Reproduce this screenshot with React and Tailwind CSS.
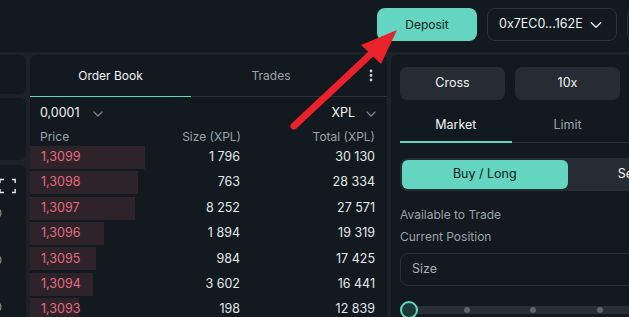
import React from "react";

const rows = [
  ["1,3099", "1 796", "30 130", 115],
  ["1,3098", "763", "28 334", 108],
  ["1,3097", "8 252", "27 571", 105],
  ["1,3096", "1 894", "19 319", 74],
  ["1,3095", "984", "17 425", 66],
  ["1,3094", "3 602", "16 441", 63],
  ["1,3093", "198", "12 839", 49],
];

function Chevron({ className }) {
  return (
    <svg className={className} width="12" height="12" viewBox="0 0 12 12" fill="none">
      <path d="M2 4l4 4 4-4" stroke="currentColor" strokeWidth="1.2" strokeLinecap="round" strokeLinejoin="round" />
    </svg>
  );
}

export default function App() {
  return (
    <div
      className="relative w-[629px] h-[317px] overflow-hidden bg-[#1c2228] text-white"
      style={{ fontFamily: "Inter, 'Noto Sans', sans-serif" }}
    >
      {/* Header */}
      <div className="h-[52px] bg-[#12191f] flex items-start justify-end pt-[8px] gap-[10px] -mr-[30px]">
        <button className="w-[100px] h-[33px] rounded-[8px] bg-[#63d5c0] text-[#102020] text-[12px] shrink-0">
          Deposit
        </button>
        <button className="w-[130px] h-[33px] rounded-[8px] border border-[#2c333a] flex items-center justify-between pl-[11px] pr-[13px] text-[12.5px] text-[#eef2f3] shrink-0">
          <span>0x7EC0...162E</span>
          <Chevron className="text-[#dfe5e7] w-[14px] h-[14px]" />
        </button>
        <div className="w-[32px] h-[33px] rounded-[8px] border border-[#2c333a] shrink-0" />
      </div>

      {/* Body */}
      <div className="mt-[3px] flex gap-[4px] items-start">
        {/* Left column (cropped) */}
        <div className="w-[26px] flex flex-col gap-[4px] shrink-0 h-[262px]">
          <div className="h-[39px] shrink-0 bg-[#12191f] rounded-r-[6px]" />
          <div className="h-[62px] shrink-0 bg-[#12191f] rounded-r-[6px]" />
          <div className="flex-1 mt-[1px] bg-[#12191f] rounded-tr-[6px] overflow-hidden">
            <svg className="mt-[13px] block" width="16" height="16" viewBox="0 0 16 16" fill="none">
              <path d="M0 5V1.5h4 M12 1.5h3.2V5 M15.2 11v3.5H12 M4 14.5H0V11" stroke="#e6eaec" strokeWidth="1.4" />
            </svg>
            <div className="text-[11px] text-[#9aa3a8] -ml-[5px] leading-none mt-[14px]">0</div>
            <div className="text-[11px] text-[#9aa3a8] -ml-[5px] leading-none mt-[36px]">0</div>
            <div className="text-[11px] text-[#9aa3a8] -ml-[5px] leading-none mt-[36px]">0</div>
          </div>
        </div>

        {/* Order book */}
        <div className="w-[357px] shrink-0 bg-[#12191f] rounded-t-[6px] h-[262px] overflow-hidden">
          <div className="h-[42px] flex border-b border-[#2a3138]">
            <div className="w-[161px] flex items-center justify-center text-[12px] text-[#f2f5f6] border-b border-[#63d5c0] -mb-px">
              Order Book
            </div>
            <div className="w-[160px] flex items-center justify-center text-[12px] text-[#9aa3a8]">
              Trades
            </div>
            <div className="flex-1 flex items-center justify-center pl-[4px]">
              <svg width="4" height="13" viewBox="0 0 4 13">
                <circle cx="2" cy="2" r="1.4" fill="#c9cfd2" />
                <circle cx="2" cy="6.5" r="1.4" fill="#c9cfd2" />
                <circle cx="2" cy="11" r="1.4" fill="#c9cfd2" />
              </svg>
            </div>
          </div>
          <div className="h-[31px] pt-[2px] flex items-center justify-between pl-[10px] pr-[10px]">
            <div className="flex items-center gap-[12px] text-[12.5px] text-[#f2f5f6]">
              <span>0,0001</span>
              <Chevron className="text-[#7c868b]" />
            </div>
            <div className="flex items-center gap-[10px] text-[12.5px] text-[#f2f5f6]">
              <span>XPL</span>
              <Chevron className="text-[#7c868b]" />
            </div>
          </div>
          <div className="h-[17px] grid grid-cols-[100px_101px_1fr] pl-[10px] pr-[12px] items-center text-[12px] text-[#9aa3a8]">
            <span>Price</span>
            <span className="text-right">Size (XPL)</span>
            <span className="text-right">Total (XPL)</span>
          </div>
          <div className="flex flex-col gap-[2.35px] mt-[1px]">
            {rows.map(([p, s, t, w]) => (
              <div key={p} className="relative h-[23px] shrink-0">
                <div className="absolute left-0 top-0 h-full bg-[#2e2329]" style={{ width: w }} />
                <div className="relative h-full grid grid-cols-[100px_99px_1fr] pl-[11px] pr-[12px] items-center text-[12.5px]">
                  <span className="text-[#e56a86]">{p}</span>
                  <span className="text-right text-[#e4e8ea]">{s}</span>
                  <span className="text-right text-[#e4e8ea]">{t}</span>
                </div>
              </div>
            ))}
          </div>
        </div>

        {/* Right trade panel */}
        <div className="w-[353px] shrink-0 bg-[#12191f] rounded-t-[6px] px-[9px] pt-[12px] h-[262px]">
          <div className="flex gap-[10px]">
            <div className="flex-1 h-[33px] rounded-[7px] bg-[#262c33] flex items-center justify-center text-[12.5px] text-[#f2f5f6]">Cross</div>
            <div className="flex-1 h-[33px] rounded-[7px] bg-[#262c33] flex items-center justify-center text-[12.5px] text-[#f2f5f6]">10x</div>
            <div className="flex-1 h-[33px] rounded-[7px] bg-[#262c33] flex items-center justify-center text-[12.5px] text-[#f2f5f6]">Classic</div>
          </div>
          <div className="mt-[9px] h-[34px] flex border-b border-[#2a3138]">
            <div className="flex-1 flex items-center justify-center text-[12.5px] text-[#f2f5f6] border-b-2 border-[#63d5c0] -mb-px">Market</div>
            <div className="flex-1 flex items-center justify-center text-[12.5px] text-[#9aa3a8]">Limit</div>
            <div className="flex-1 flex items-center justify-center text-[12.5px] text-[#9aa3a8]">Pro</div>
          </div>
          <div className="mt-[15px] h-[33px] rounded-[8px] bg-[#262c33] p-[2px] flex">
            <div className="flex-1 rounded-[6px] bg-[#63d5c0] flex items-center justify-center text-[12.5px] text-[#102020]">Buy / Long</div>
            <div className="flex-1 flex items-center justify-center text-[12.5px] text-[#f2f5f6]">Sell / Short</div>
          </div>
          <div className="mt-[16px] text-[12px] text-[#9aa3a8] leading-[16px]">Available to Trade</div>
          <div className="mt-[6px] text-[12px] text-[#9aa3a8] leading-[16px]">Current Position</div>
          <div className="mt-[8px] h-[33px] rounded-[8px] border border-[#2a3138] flex items-center pl-[11px] text-[12.5px] text-[#a7afb3]">Size</div>
          <div className="mt-[15px] relative h-[18px]">
            <div className="absolute left-[8px] right-0 top-[5px] h-[8px] bg-[#283036] rounded-full" />
            <div className="relative flex items-center h-full">
              <div className="w-[18px] h-[18px] rounded-full border-2 border-[#63d5c0] bg-[#1b3a35] shrink-0" />
              <div className="w-[6px] h-[6px] rounded-full bg-[#5b656b] ml-[46px]" />
              <div className="w-[6px] h-[6px] rounded-full bg-[#5b656b] ml-[60px]" />
              <div className="w-[6px] h-[6px] rounded-full bg-[#5b656b] ml-[61px]" />
            </div>
          </div>
        </div>
      </div>

      {/* Red annotation arrow */}
      <svg className="absolute left-0 top-0 pointer-events-none" width="629" height="317" viewBox="0 0 629 317">
        <line x1="294" y1="126" x2="372" y2="53" stroke="#e9222b" strokeWidth="7" strokeLinecap="round" />
        <polygon points="397,30 361,45 381,64" fill="#e9222b" />
      </svg>
    </div>
  );
}
